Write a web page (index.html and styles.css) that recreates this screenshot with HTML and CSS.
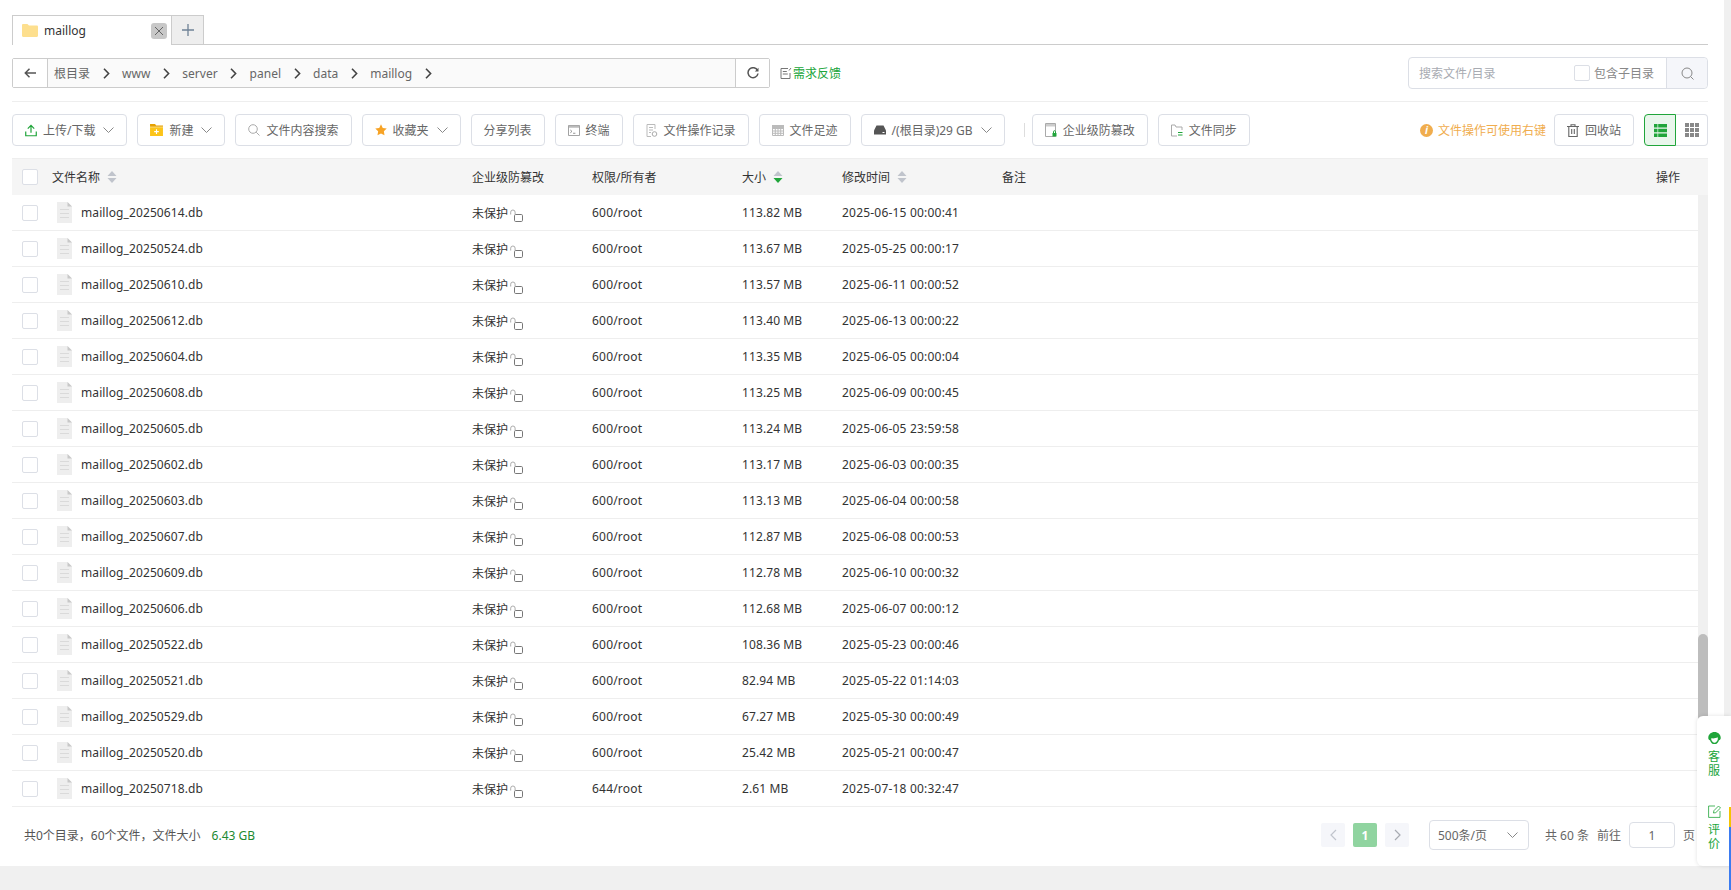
FILE: index.html
```html
<!DOCTYPE html>
<html lang="en">
<head>
    <meta charset="UTF-8">
    <title>maillog</title>
    <link rel="stylesheet" href="styles.css">
</head>
<body>
    <svg class="defs" width="0" height="0">
        <symbol id="i-file" viewBox="0 0 15 21">
            <path d="M0 0h10.500L15 4.500V21H0z" fill="#eeeeee"/>
            <path d="M10.500 0L15 4.500h-4.500z" fill="#c8c8c8"/>
            <path d="M3 7.500h9M3 11.500h9M3 15.500h9" stroke="#dadada" fill="none"/>
        </symbol>
        <symbol id="i-lock" viewBox="0 0 13 13">
            <rect x="4.500" y="5.500" width="8" height="7" rx="1.200" fill="none" stroke="#777"/>
            <path d="M.7 5.500V3.200a2.200 2.200 0 0 1 4.400 0v2" fill="none" stroke="#aaa"/>
        </symbol>
        <symbol id="i-sort" viewBox="0 0 10 12">
            <path d="M5 0l4.500 5h-9z" fill="#c0c4cc"/>
            <path d="M5 12L.5 7h9z" fill="#c0c4cc"/>
        </symbol>
        <symbol id="i-sort-down" viewBox="0 0 10 12">
            <path d="M5 0l4.500 5h-9z" fill="#c0c4cc"/>
            <path d="M5 12L.5 7h9z" fill="#20a53a"/>
        </symbol>
        <symbol id="i-caret" viewBox="0 0 11 6">
            <path d="M.5.5l5 5 5-5" fill="none" stroke="#888"/>
        </symbol>
        <symbol id="i-crumb" viewBox="0 0 7 11">
            <path d="M1 .8l4.600 4.700L1 10.200" fill="none" stroke="#444" stroke-width="1.600"/>
        </symbol>
    </svg>

    <div class="page">
        <div class="tabs">
            <div class="tab">
                <svg class="tab-folder" width="16" height="13" viewBox="0 0 16 13">
                    <path d="M0 1.200C0 .5.500 0 1.200 0h4.200l1.600 1.600h7.800c.7 0 1.200.5 1.200 1.200v9c0 .7-.5 1.200-1.200 1.200H1.200C.5 13 0 12.500 0 11.800z" fill="#fddf8e"/>
                </svg>
                <span class="tab-name">maillog</span>
                <span class="tab-close">
                    <svg width="10" height="10" viewBox="0 0 10 10"><path d="M1 1l8 8M9 1l-8 8" stroke="#666" fill="none"/></svg>
                </span>
            </div>
            <div class="tab-add">
                <svg width="12" height="12" viewBox="0 0 12 12"><path d="M6 0v12M0 6h12" stroke="#6f8296" stroke-width="1.300" fill="none"/></svg>
            </div>
        </div>

        <div class="pathbar">
            <div class="crumbs">
                <button class="crumb-btn">
                    <svg width="12" height="10" viewBox="0 0 12 10"><path d="M5.500.8L1.300 5l4.200 4.200M1.500 5H12" fill="none" stroke="#555" stroke-width="1.500"/></svg>
                </button>
                <div class="crumb-path">
                    <span class="crumb">根目录</span><span class="crumb-sep"><svg width="7" height="11"><use href="#i-crumb"/></svg></span>
                    <span class="crumb">www</span><span class="crumb-sep"><svg width="7" height="11"><use href="#i-crumb"/></svg></span>
                    <span class="crumb">server</span><span class="crumb-sep"><svg width="7" height="11"><use href="#i-crumb"/></svg></span>
                    <span class="crumb">panel</span><span class="crumb-sep"><svg width="7" height="11"><use href="#i-crumb"/></svg></span>
                    <span class="crumb">data</span><span class="crumb-sep"><svg width="7" height="11"><use href="#i-crumb"/></svg></span>
                    <span class="crumb">maillog</span><span class="crumb-sep"><svg width="7" height="11"><use href="#i-crumb"/></svg></span>
                </div>
                <button class="crumb-btn crumb-refresh">
                    <svg width="12" height="12" viewBox="0 0 12 12"><path d="M10.600 3.600A5 5 0 1 0 11 6.500" fill="none" stroke="#555" stroke-width="1.500"/><path d="M11.500.8v3.700H7.800z" fill="#555"/></svg>
                </button>
            </div>
            <a class="feedback">
                <svg width="12" height="12" viewBox="0 0 12 12"><path d="M8 1.500H1v10h9V6M2.800 4.500h4M2.800 7h5M9 3.500l2-2.500" fill="none" stroke="#777"/></svg>
                <span>需求反馈</span>
            </a>
            <div class="search">
                <input class="search-input" type="text" placeholder="搜索文件/目录">
                <label class="search-sub"><span class="check"></span>包含子目录</label>
                <span class="search-btn">
                    <svg width="13" height="13" viewBox="0 0 13 13"><circle cx="6" cy="6" r="5" fill="none" stroke="#888"/><path d="M9.600 9.600L12.500 12.500" stroke="#888"/></svg>
                </span>
            </div>
        </div>

        <div class="toolbar">
            <button class="btn">
                <svg width="12" height="13" viewBox="0 0 13 13"><path d="M.8 7.500v4.700h11.400V7.500M6.500 9V1.200M3 4.500L6.500 1 10 4.500" fill="none" stroke="#20a53a" stroke-width="1.300"/></svg>
                上传/下载
                <svg class="caret" width="11" height="6"><use href="#i-caret"/></svg>
            </button>
            <button class="btn">
                <svg width="13" height="12" viewBox="0 0 14 13"><path d="M0 0h5.500l1 1.500H14V3H0z" fill="#e6a100"/><path d="M0 3.500h14V13H0z" fill="#fcc419"/><path d="M7 5.800v5M4.500 8.300h5" stroke="#fff" stroke-width="1.200"/></svg>
                新建
                <svg class="caret" width="11" height="6"><use href="#i-caret"/></svg>
            </button>
            <button class="btn">
                <svg width="12" height="12" viewBox="0 0 12 12"><circle cx="5" cy="5" r="4.300" fill="none" stroke="#aaa"/><path d="M8.200 8.200L11.500 11.500" stroke="#aaa"/></svg>
                文件内容搜索
            </button>
            <button class="btn">
                <svg width="12" height="12" viewBox="0 0 13 13"><path d="M6.500.3l1.900 4 4.300.6-3.100 3 .7 4.400-3.800-2.100-3.800 2.100.7-4.400-3.100-3 4.300-.6z" fill="#f7a325"/></svg>
                收藏夹
                <svg class="caret" width="11" height="6"><use href="#i-caret"/></svg>
            </button>
            <button class="btn">分享列表</button>
            <button class="btn">
                <svg width="12" height="11" viewBox="0 0 13 12"><path d="M.5.5h12v11H.5z" fill="none" stroke="#999"/><path d="M1 1h11v2H1z" fill="#bbb"/><path d="M2.500 5.500L4.300 7 2.500 8.500M5.500 9h2.500" fill="none" stroke="#888"/></svg>
                终端
            </button>
            <button class="btn">
                <svg width="12" height="13" viewBox="0 0 11 13"><path d="M8.500 5V.5H.5v12h4M2.500 3.500h4M2.500 6h4M2.500 8.500h2" fill="none" stroke="#bbb"/><circle cx="8" cy="10" r="2.300" fill="none" stroke="#aaa"/></svg>
                文件操作记录
            </button>
            <button class="btn">
                <svg width="12" height="12" viewBox="0 0 12 12"><path d="M.5 1.500h11v10H.5zM.5 4.500h11M.5 7h11M.5 9.300h11M3.300 4.500v7M6 4.500v7M8.700 4.500v7" fill="none" stroke="#bbb"/><path d="M0 1h12v3H0z" fill="#bbb"/></svg>
                文件足迹
            </button>
            <button class="btn">
                <svg width="12" height="10" viewBox="0 0 12 10"><path d="M2.500.5h7L12 5.500V9.500H0V5.500z" fill="#555"/><path d="M8.500 7.500h2" stroke="#fff"/></svg>
                /(根目录)29 GB
                <svg class="caret" width="11" height="6"><use href="#i-caret"/></svg>
            </button>
            <span class="tool-sep"></span>
            <button class="btn">
                <svg width="12" height="14" viewBox="0 0 12 14"><path d="M.5.5h10v13H.5z" fill="none" stroke="#aaa"/><path d="M1 1h9v2.500H1z" fill="#ccc"/><path d="M7.500 10h4v3.500h-4z" fill="#20a53a"/><path d="M8.500 10V8.700a1 1 0 0 1 2 0V10" fill="none" stroke="#20a53a"/></svg>
                企业级防篡改
            </button>
            <button class="btn">
                <svg width="12" height="13" viewBox="0 0 12 13"><path d="M11 6V3H5L4 1H.5v11H6" fill="none" stroke="#aaa"/><path d="M7 8.500h4.500M7 11h4.500" stroke="#20a53a"/></svg>
                文件同步
            </button>
            <div class="tool-right">
                <span class="notice">
                    <span class="notice-icon">i</span>文件操作可使用右键
                </span>
                <button class="btn">
                    <svg width="12" height="13" viewBox="0 0 12 13"><path d="M0 2.500h12M4 2.500V.7h4v1.800M1.800 2.500v10h8.400v-10M4.700 5v5M7.300 5v5" fill="none" stroke="#666" stroke-width="1.100"/></svg>
                    回收站
                </button>
                <div class="views">
                    <span class="view view-on">
                        <svg width="13" height="13" viewBox="0 0 13 13"><path d="M0 0h3.500v3.600H0zM4.200 0H13v3.600H4.200zM0 4.700h3.500v3.600H0zM4.200 4.700H13v3.600H4.200zM0 9.400h3.500V13H0zM4.200 9.400H13V13H4.200z" fill="#20a53a"/></svg>
                    </span>
                    <span class="view">
                        <svg width="14" height="14" viewBox="0 0 14 14"><path d="M0 0h4v4H0zM5 0h4v4H5zM10 0h4v4h-4zM0 5h4v4H0zM5 5h4v4H5zM10 5h4v4h-4zM0 10h4v4H0zM5 10h4v4H5zM10 10h4v4h-4z" fill="#888"/></svg>
                    </span>
                </div>
            </div>
        </div>

        <div class="file-head">
            <div class="col-name"><span class="check"></span><span class="head-label">文件名称</span><svg class="sort" width="10" height="12"><use href="#i-sort"/></svg></div>
            <div>企业级防篡改</div>
            <div>权限/所有者</div>
            <div>大小<svg class="sort" width="10" height="12"><use href="#i-sort-down"/></svg></div>
            <div>修改时间<svg class="sort" width="10" height="12"><use href="#i-sort"/></svg></div>
            <div>备注</div>
            <div>操作</div>
        </div>

        <div class="file-body">
            <div class="file-list">
                <div class="file-row"><div class="col-name"><span class="check"></span><svg class="file-icon" width="15" height="21"><use href="#i-file"/></svg>maillog_20250614.db</div><div class="col-lock">未保护<svg width="13" height="13"><use href="#i-lock"/></svg></div><div>600/root</div><div>113.82 MB</div><div>2025-06-15 00:00:41</div></div>
                <div class="file-row"><div class="col-name"><span class="check"></span><svg class="file-icon" width="15" height="21"><use href="#i-file"/></svg>maillog_20250524.db</div><div class="col-lock">未保护<svg width="13" height="13"><use href="#i-lock"/></svg></div><div>600/root</div><div>113.67 MB</div><div>2025-05-25 00:00:17</div></div>
                <div class="file-row"><div class="col-name"><span class="check"></span><svg class="file-icon" width="15" height="21"><use href="#i-file"/></svg>maillog_20250610.db</div><div class="col-lock">未保护<svg width="13" height="13"><use href="#i-lock"/></svg></div><div>600/root</div><div>113.57 MB</div><div>2025-06-11 00:00:52</div></div>
                <div class="file-row"><div class="col-name"><span class="check"></span><svg class="file-icon" width="15" height="21"><use href="#i-file"/></svg>maillog_20250612.db</div><div class="col-lock">未保护<svg width="13" height="13"><use href="#i-lock"/></svg></div><div>600/root</div><div>113.40 MB</div><div>2025-06-13 00:00:22</div></div>
                <div class="file-row"><div class="col-name"><span class="check"></span><svg class="file-icon" width="15" height="21"><use href="#i-file"/></svg>maillog_20250604.db</div><div class="col-lock">未保护<svg width="13" height="13"><use href="#i-lock"/></svg></div><div>600/root</div><div>113.35 MB</div><div>2025-06-05 00:00:04</div></div>
                <div class="file-row"><div class="col-name"><span class="check"></span><svg class="file-icon" width="15" height="21"><use href="#i-file"/></svg>maillog_20250608.db</div><div class="col-lock">未保护<svg width="13" height="13"><use href="#i-lock"/></svg></div><div>600/root</div><div>113.25 MB</div><div>2025-06-09 00:00:45</div></div>
                <div class="file-row"><div class="col-name"><span class="check"></span><svg class="file-icon" width="15" height="21"><use href="#i-file"/></svg>maillog_20250605.db</div><div class="col-lock">未保护<svg width="13" height="13"><use href="#i-lock"/></svg></div><div>600/root</div><div>113.24 MB</div><div>2025-06-05 23:59:58</div></div>
                <div class="file-row"><div class="col-name"><span class="check"></span><svg class="file-icon" width="15" height="21"><use href="#i-file"/></svg>maillog_20250602.db</div><div class="col-lock">未保护<svg width="13" height="13"><use href="#i-lock"/></svg></div><div>600/root</div><div>113.17 MB</div><div>2025-06-03 00:00:35</div></div>
                <div class="file-row"><div class="col-name"><span class="check"></span><svg class="file-icon" width="15" height="21"><use href="#i-file"/></svg>maillog_20250603.db</div><div class="col-lock">未保护<svg width="13" height="13"><use href="#i-lock"/></svg></div><div>600/root</div><div>113.13 MB</div><div>2025-06-04 00:00:58</div></div>
                <div class="file-row"><div class="col-name"><span class="check"></span><svg class="file-icon" width="15" height="21"><use href="#i-file"/></svg>maillog_20250607.db</div><div class="col-lock">未保护<svg width="13" height="13"><use href="#i-lock"/></svg></div><div>600/root</div><div>112.87 MB</div><div>2025-06-08 00:00:53</div></div>
                <div class="file-row"><div class="col-name"><span class="check"></span><svg class="file-icon" width="15" height="21"><use href="#i-file"/></svg>maillog_20250609.db</div><div class="col-lock">未保护<svg width="13" height="13"><use href="#i-lock"/></svg></div><div>600/root</div><div>112.78 MB</div><div>2025-06-10 00:00:32</div></div>
                <div class="file-row"><div class="col-name"><span class="check"></span><svg class="file-icon" width="15" height="21"><use href="#i-file"/></svg>maillog_20250606.db</div><div class="col-lock">未保护<svg width="13" height="13"><use href="#i-lock"/></svg></div><div>600/root</div><div>112.68 MB</div><div>2025-06-07 00:00:12</div></div>
                <div class="file-row"><div class="col-name"><span class="check"></span><svg class="file-icon" width="15" height="21"><use href="#i-file"/></svg>maillog_20250522.db</div><div class="col-lock">未保护<svg width="13" height="13"><use href="#i-lock"/></svg></div><div>600/root</div><div>108.36 MB</div><div>2025-05-23 00:00:46</div></div>
                <div class="file-row"><div class="col-name"><span class="check"></span><svg class="file-icon" width="15" height="21"><use href="#i-file"/></svg>maillog_20250521.db</div><div class="col-lock">未保护<svg width="13" height="13"><use href="#i-lock"/></svg></div><div>600/root</div><div>82.94 MB</div><div>2025-05-22 01:14:03</div></div>
                <div class="file-row"><div class="col-name"><span class="check"></span><svg class="file-icon" width="15" height="21"><use href="#i-file"/></svg>maillog_20250529.db</div><div class="col-lock">未保护<svg width="13" height="13"><use href="#i-lock"/></svg></div><div>600/root</div><div>67.27 MB</div><div>2025-05-30 00:00:49</div></div>
                <div class="file-row"><div class="col-name"><span class="check"></span><svg class="file-icon" width="15" height="21"><use href="#i-file"/></svg>maillog_20250520.db</div><div class="col-lock">未保护<svg width="13" height="13"><use href="#i-lock"/></svg></div><div>600/root</div><div>25.42 MB</div><div>2025-05-21 00:00:47</div></div>
                <div class="file-row"><div class="col-name"><span class="check"></span><svg class="file-icon" width="15" height="21"><use href="#i-file"/></svg>maillog_20250718.db</div><div class="col-lock">未保护<svg width="13" height="13"><use href="#i-lock"/></svg></div><div>644/root</div><div>2.61 MB</div><div>2025-07-18 00:32:47</div></div>
            </div>
            <div class="scroll-track"><div class="scroll-thumb"></div></div>
        </div>

        <div class="footer">
            <div class="summary">共0个目录，60个文件，文件大小<span class="summary-size">6.43 GB</span></div>
            <div class="pager">
                <span class="page-arrow">
                    <svg width="7" height="12" viewBox="0 0 7 12"><path d="M6 1L1 6l5 5" fill="none" stroke="#c0c4cc" stroke-width="1.200"/></svg>
                </span>
                <span class="page-num">1</span>
                <span class="page-arrow">
                    <svg width="7" height="12" viewBox="0 0 7 12"><path d="M1 1l5 5-5 5" fill="none" stroke="#a8abb2" stroke-width="1.200"/></svg>
                </span>
                <div class="page-size">500条/页<svg width="11" height="6"><use href="#i-caret"/></svg></div>
                <span class="page-total">共 60 条</span>
                <span class="page-jump">前往</span>
                <input class="page-input" type="text" value="1">
                <span class="page-unit">页</span>
            </div>
        </div>
    </div>

    <div class="side-widget">
        <div class="side-item">
            <svg width="13" height="13" viewBox="0 0 13 13"><path d="M6.500 0C3 0 .5 2.400.3 5.500.1 7 .8 8 2 8.200c.6 1.700 1.600 3.200 3 3.800h3c1.400-.6 2.400-2.100 3-3.800 1.200-.2 1.900-1.200 1.700-2.700C12.500 2.400 10 0 6.500 0z" fill="#20a53a"/><path d="M3.300 6.300c1.800.2 4.500.2 6.400-1 .2.900.2 1.600 0 2.400-.4 1.500-1.800 3-3.200 3s-2.800-1.500-3.200-3c-.1-.5-.1-.9 0-1.400z" fill="#fff"/></svg>
            <span>客<br>服</span>
        </div>
        <div class="side-item">
            <svg width="13" height="13" viewBox="0 0 13 13"><path d="M7 1H.6v11.400H12V6M5.500 8l.4-2.300L10.500 1l2 2-4.700 4.600z" fill="none" stroke="#20a53a" stroke-opacity=".8"/></svg>
            <span>评<br>价</span>
        </div>
    </div>
    <div class="side-strip"></div>
</body>
</html>
```

FILE: styles.css
```css
* {
    box-sizing: border-box;
}

body {
    font-family: "Noto Sans", "Noto Sans CJK SC", sans-serif;
    font-size: 12px;
    margin: 0;
    height: 890px;
    overflow: hidden;
    background-color: #f0f0f0;
    color: #333;
}

button,
input {
    font: inherit;
}

.defs {
    position: absolute;
}

.page {
    width: 1724px;
    height: 866px;
    padding: 0 16px 0 12px;
    background-color: #fff;
    display: flex;
    flex-direction: column;
}

/* tabs */
.tabs {
    height: 45px;
    padding-top: 15px;
    display: flex;
    border-bottom: 1px solid #ccc;
}

.tab {
    width: 160px;
    height: 30px;
    padding: 0 4px 0 9px;
    display: flex;
    align-items: center;
    background-color: #fff;
    border: 1px solid #ccc;
    border-bottom: none;
}

.tab-folder {
    margin-right: 6px;
}

.tab-name {
    flex: 1;
    font-size: 12px;
}

.tab-close {
    width: 16px;
    height: 16px;
    background-color: #c8c8c8;
    border-radius: 3px;
    display: flex;
    align-items: center;
    justify-content: center;
}

.tab-add {
    width: 33px;
    height: 29px;
    margin-left: -1px;
    background-color: #eee;
    border: 1px solid #ccc;
    border-bottom: none;
    display: flex;
    align-items: center;
    justify-content: center;
}

/* address bar */
.pathbar {
    height: 57px;
    padding: 12px 0;
    display: flex;
    align-items: center;
    border-bottom: 1px solid #eee;
}

.crumbs {
    width: 758px;
    height: 30px;
    display: flex;
    border: 1px solid #ccc;
    border-radius: 2px;
}

.crumb-btn {
    width: 35px;
    padding: 0;
    background-color: #fff;
    border: none;
    border-right: 1px solid #ccc;
    display: flex;
    align-items: center;
    justify-content: center;
}

.crumb-refresh {
    width: 34px;
    border-right: none;
    border-left: 1px solid #ccc;
}

.crumb-path {
    flex: 1;
    padding-left: 6px;
    background-color: #fafafa;
    display: flex;
    align-items: center;
    color: #666;
}

.crumb-sep {
    width: 32px;
    display: flex;
    justify-content: center;
}

.feedback {
    margin-left: 10px;
    display: flex;
    align-items: center;
    gap: 1px;
    color: #20a53a;
}

.search {
    width: 300px;
    height: 32px;
    margin-left: auto;
    display: flex;
    align-items: center;
    border: 1px solid #dcdfe6;
    border-radius: 4px;
}

.search-input {
    width: 165px;
    padding: 0 0 0 10px;
    border: none;
    outline: none;
    color: #666;
}

.search-input::placeholder {
    color: #a8abb2;
}

.search-sub {
    display: flex;
    align-items: center;
    gap: 4px;
    color: #888;
}

.search-btn {
    width: 41px;
    height: 30px;
    margin-left: auto;
    background-color: #f5f6fa;
    border-left: 1px solid #dcdfe6;
    border-radius: 0 4px 4px 0;
    display: flex;
    align-items: center;
    justify-content: center;
}

.check {
    width: 16px;
    height: 16px;
    background-color: #fff;
    border: 1px solid #dcdfe6;
    border-radius: 2px;
    flex-shrink: 0;
}

/* toolbar */
.toolbar {
    height: 56px;
    padding: 12px 0;
    display: flex;
    align-items: center;
    gap: 10px;
}

.btn {
    height: 32px;
    padding: 0 12px;
    background-color: #fff;
    color: #666;
    border: 1px solid #dcdfe6;
    border-radius: 4px;
    display: flex;
    align-items: center;
    gap: 6px;
    white-space: nowrap;
}

.caret {
    margin-left: 2px;
}

.tool-sep {
    width: 1px;
    height: 14px;
    margin: 0 -3px 0 9px;
    background-color: #ddd;
}

.tool-right {
    margin-left: auto;
    display: flex;
    align-items: center;
    gap: 8px;
}

.notice {
    display: flex;
    align-items: center;
    gap: 5px;
    color: #f0ad4e;
}

.notice-icon {
    width: 13px;
    height: 13px;
    background-color: #f0ad4e;
    color: #fff;
    border-radius: 50%;
    font-size: 10px;
    font-style: italic;
    font-weight: 700;
    line-height: 13px;
    text-align: center;
}

.views {
    margin-left: 2px;
    display: flex;
}

.view {
    width: 32px;
    height: 32px;
    border: 1px solid #dcdfe6;
    border-left: none;
    border-radius: 0 4px 4px 0;
    display: flex;
    align-items: center;
    justify-content: center;
}

.view-on {
    background-color: #e9f6ec;
    border: 1px solid #20a53a;
    border-radius: 4px 0 0 4px;
}

/* file table */
.file-head,
.file-row {
    display: grid;
    grid-template-columns: 460px 120px 150px 100px 160px 1fr auto;
    align-items: center;
}

.file-head {
    height: 37px;
    padding-right: 28px;
    background-color: #f5f5f5;
    border-top: 1px solid #eee;
}

.file-head > div {
    display: flex;
    align-items: center;
}

.sort {
    margin-left: 7px;
}

.head-label {
    margin-left: 14px;
}

.file-body {
    height: 612px;
    display: flex;
}

.file-list {
    flex: 1;
}

.file-row {
    height: 36px;
    border-bottom: 1px solid #eee;
    letter-spacing: .1px;
}

.file-row > div:nth-child(3),
.file-row > div:nth-child(5) {
    letter-spacing: .2px;
}

.col-name {
    padding-left: 10px;
    display: flex;
    align-items: center;
}

.file-icon {
    margin: 0 9px 0 19px;
}

.col-lock {
    display: flex;
    align-items: center;
    gap: 2px;
    letter-spacing: 0;
}

.col-lock svg {
    margin-top: 5px;
}

.scroll-track {
    width: 10px;
    padding-top: 439px;
    background-color: #f0f0f0;
}

.scroll-thumb {
    height: 173px;
    background-color: #bdbdbd;
    border-radius: 5px 5px 0 0;
}

/* footer */
.footer {
    flex: 1;
    padding: 0 13px 3px 12px;
    display: flex;
    align-items: center;
    justify-content: space-between;
}

.summary {
    color: #555;
}

.summary-size {
    margin-left: 11px;
    color: #20892f;
}

.pager {
    display: flex;
    align-items: center;
    color: #666;
}

.page-arrow,
.page-num {
    width: 24px;
    height: 24px;
    margin-right: 8px;
    background-color: #f5f6fa;
    border-radius: 2px;
    display: flex;
    align-items: center;
    justify-content: center;
}

.page-num {
    background-color: #90d4a0;
    color: #fff;
    font-weight: 700;
}

.page-size {
    width: 100px;
    height: 30px;
    margin: 0 16px 0 12px;
    padding: 0 10px 0 8px;
    border: 1px solid #dcdfe6;
    border-radius: 4px;
    display: flex;
    align-items: center;
    justify-content: space-between;
}

.page-jump {
    margin-left: 8px;
}

.page-input {
    width: 46px;
    height: 26px;
    margin: 0 8px;
    border: 1px solid #dcdfe6;
    border-radius: 4px;
    text-align: center;
    color: #666;
    outline: none;
}

/* floating help widget */
.side-widget {
    position: absolute;
    left: 1697px;
    top: 716px;
    width: 34px;
    height: 150px;
    padding-top: 16px;
    background-color: #fff;
    border-radius: 6px 0 0 6px;
    box-shadow: 0 0 4px rgba(0,0,0,0.12);
    display: flex;
    flex-direction: column;
    gap: 27px;
}

.side-item {
    display: flex;
    flex-direction: column;
    align-items: center;
    gap: 5px;
    color: #20a53a;
    line-height: 14px;
    text-align: center;
}

.side-strip {
    position: absolute;
    left: 1729px;
    top: 807px;
    bottom: 0;
    width: 2px;
    background: linear-gradient(#f5c400 0 20px, #3b7bf0 20px);
}
```
